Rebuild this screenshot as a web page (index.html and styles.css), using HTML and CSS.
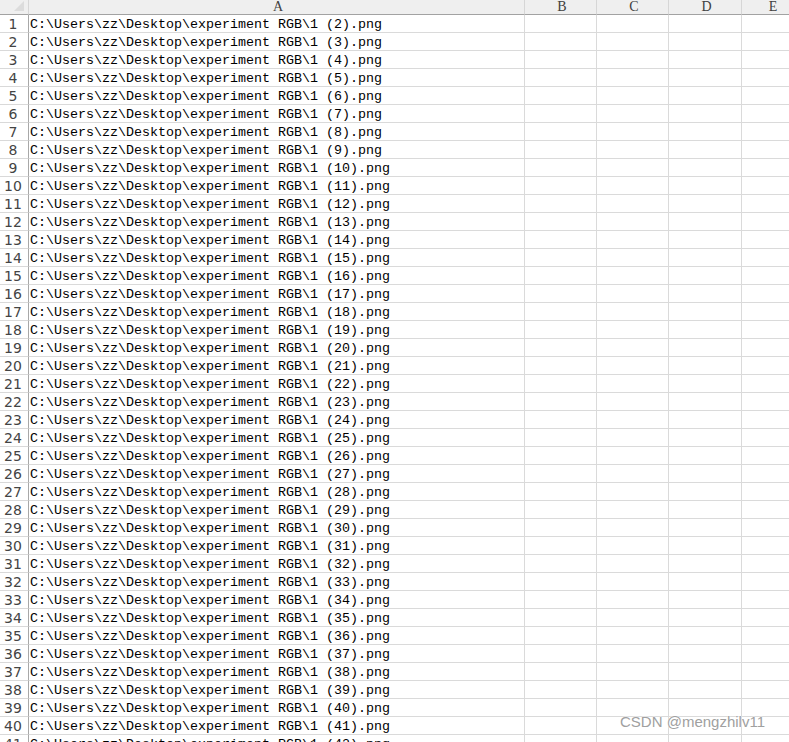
FILE: index.html
```html
<!DOCTYPE html>
<html>
<head>
<meta charset="utf-8">
<link rel="stylesheet" href="styles.css">
</head>
<body>
<div class="sheet">
  <div class="grid">
    <div class="hd corner"><span class="tri"></span></div>
    <div class="hd col">A</div>
    <div class="hd col">B</div>
    <div class="hd col">C</div>
    <div class="hd col">D</div>
    <div class="hd col last">E</div>

    <div class="rn">1</div><div class="cell a">C:\Users\zz\Desktop\experiment RGB\1 (2).png</div><div class="cell"></div><div class="cell"></div><div class="cell"></div><div class="cell last"></div>
    <div class="rn">2</div><div class="cell a">C:\Users\zz\Desktop\experiment RGB\1 (3).png</div><div class="cell"></div><div class="cell"></div><div class="cell"></div><div class="cell last"></div>
    <div class="rn">3</div><div class="cell a">C:\Users\zz\Desktop\experiment RGB\1 (4).png</div><div class="cell"></div><div class="cell"></div><div class="cell"></div><div class="cell last"></div>
    <div class="rn">4</div><div class="cell a">C:\Users\zz\Desktop\experiment RGB\1 (5).png</div><div class="cell"></div><div class="cell"></div><div class="cell"></div><div class="cell last"></div>
    <div class="rn">5</div><div class="cell a">C:\Users\zz\Desktop\experiment RGB\1 (6).png</div><div class="cell"></div><div class="cell"></div><div class="cell"></div><div class="cell last"></div>
    <div class="rn">6</div><div class="cell a">C:\Users\zz\Desktop\experiment RGB\1 (7).png</div><div class="cell"></div><div class="cell"></div><div class="cell"></div><div class="cell last"></div>
    <div class="rn">7</div><div class="cell a">C:\Users\zz\Desktop\experiment RGB\1 (8).png</div><div class="cell"></div><div class="cell"></div><div class="cell"></div><div class="cell last"></div>
    <div class="rn">8</div><div class="cell a">C:\Users\zz\Desktop\experiment RGB\1 (9).png</div><div class="cell"></div><div class="cell"></div><div class="cell"></div><div class="cell last"></div>
    <div class="rn">9</div><div class="cell a">C:\Users\zz\Desktop\experiment RGB\1 (10).png</div><div class="cell"></div><div class="cell"></div><div class="cell"></div><div class="cell last"></div>
    <div class="rn">10</div><div class="cell a">C:\Users\zz\Desktop\experiment RGB\1 (11).png</div><div class="cell"></div><div class="cell"></div><div class="cell"></div><div class="cell last"></div>
    <div class="rn">11</div><div class="cell a">C:\Users\zz\Desktop\experiment RGB\1 (12).png</div><div class="cell"></div><div class="cell"></div><div class="cell"></div><div class="cell last"></div>
    <div class="rn">12</div><div class="cell a">C:\Users\zz\Desktop\experiment RGB\1 (13).png</div><div class="cell"></div><div class="cell"></div><div class="cell"></div><div class="cell last"></div>
    <div class="rn">13</div><div class="cell a">C:\Users\zz\Desktop\experiment RGB\1 (14).png</div><div class="cell"></div><div class="cell"></div><div class="cell"></div><div class="cell last"></div>
    <div class="rn">14</div><div class="cell a">C:\Users\zz\Desktop\experiment RGB\1 (15).png</div><div class="cell"></div><div class="cell"></div><div class="cell"></div><div class="cell last"></div>
    <div class="rn">15</div><div class="cell a">C:\Users\zz\Desktop\experiment RGB\1 (16).png</div><div class="cell"></div><div class="cell"></div><div class="cell"></div><div class="cell last"></div>
    <div class="rn">16</div><div class="cell a">C:\Users\zz\Desktop\experiment RGB\1 (17).png</div><div class="cell"></div><div class="cell"></div><div class="cell"></div><div class="cell last"></div>
    <div class="rn">17</div><div class="cell a">C:\Users\zz\Desktop\experiment RGB\1 (18).png</div><div class="cell"></div><div class="cell"></div><div class="cell"></div><div class="cell last"></div>
    <div class="rn">18</div><div class="cell a">C:\Users\zz\Desktop\experiment RGB\1 (19).png</div><div class="cell"></div><div class="cell"></div><div class="cell"></div><div class="cell last"></div>
    <div class="rn">19</div><div class="cell a">C:\Users\zz\Desktop\experiment RGB\1 (20).png</div><div class="cell"></div><div class="cell"></div><div class="cell"></div><div class="cell last"></div>
    <div class="rn">20</div><div class="cell a">C:\Users\zz\Desktop\experiment RGB\1 (21).png</div><div class="cell"></div><div class="cell"></div><div class="cell"></div><div class="cell last"></div>
    <div class="rn">21</div><div class="cell a">C:\Users\zz\Desktop\experiment RGB\1 (22).png</div><div class="cell"></div><div class="cell"></div><div class="cell"></div><div class="cell last"></div>
    <div class="rn">22</div><div class="cell a">C:\Users\zz\Desktop\experiment RGB\1 (23).png</div><div class="cell"></div><div class="cell"></div><div class="cell"></div><div class="cell last"></div>
    <div class="rn">23</div><div class="cell a">C:\Users\zz\Desktop\experiment RGB\1 (24).png</div><div class="cell"></div><div class="cell"></div><div class="cell"></div><div class="cell last"></div>
    <div class="rn">24</div><div class="cell a">C:\Users\zz\Desktop\experiment RGB\1 (25).png</div><div class="cell"></div><div class="cell"></div><div class="cell"></div><div class="cell last"></div>
    <div class="rn">25</div><div class="cell a">C:\Users\zz\Desktop\experiment RGB\1 (26).png</div><div class="cell"></div><div class="cell"></div><div class="cell"></div><div class="cell last"></div>
    <div class="rn">26</div><div class="cell a">C:\Users\zz\Desktop\experiment RGB\1 (27).png</div><div class="cell"></div><div class="cell"></div><div class="cell"></div><div class="cell last"></div>
    <div class="rn">27</div><div class="cell a">C:\Users\zz\Desktop\experiment RGB\1 (28).png</div><div class="cell"></div><div class="cell"></div><div class="cell"></div><div class="cell last"></div>
    <div class="rn">28</div><div class="cell a">C:\Users\zz\Desktop\experiment RGB\1 (29).png</div><div class="cell"></div><div class="cell"></div><div class="cell"></div><div class="cell last"></div>
    <div class="rn">29</div><div class="cell a">C:\Users\zz\Desktop\experiment RGB\1 (30).png</div><div class="cell"></div><div class="cell"></div><div class="cell"></div><div class="cell last"></div>
    <div class="rn">30</div><div class="cell a">C:\Users\zz\Desktop\experiment RGB\1 (31).png</div><div class="cell"></div><div class="cell"></div><div class="cell"></div><div class="cell last"></div>
    <div class="rn">31</div><div class="cell a">C:\Users\zz\Desktop\experiment RGB\1 (32).png</div><div class="cell"></div><div class="cell"></div><div class="cell"></div><div class="cell last"></div>
    <div class="rn">32</div><div class="cell a">C:\Users\zz\Desktop\experiment RGB\1 (33).png</div><div class="cell"></div><div class="cell"></div><div class="cell"></div><div class="cell last"></div>
    <div class="rn">33</div><div class="cell a">C:\Users\zz\Desktop\experiment RGB\1 (34).png</div><div class="cell"></div><div class="cell"></div><div class="cell"></div><div class="cell last"></div>
    <div class="rn">34</div><div class="cell a">C:\Users\zz\Desktop\experiment RGB\1 (35).png</div><div class="cell"></div><div class="cell"></div><div class="cell"></div><div class="cell last"></div>
    <div class="rn">35</div><div class="cell a">C:\Users\zz\Desktop\experiment RGB\1 (36).png</div><div class="cell"></div><div class="cell"></div><div class="cell"></div><div class="cell last"></div>
    <div class="rn">36</div><div class="cell a">C:\Users\zz\Desktop\experiment RGB\1 (37).png</div><div class="cell"></div><div class="cell"></div><div class="cell"></div><div class="cell last"></div>
    <div class="rn">37</div><div class="cell a">C:\Users\zz\Desktop\experiment RGB\1 (38).png</div><div class="cell"></div><div class="cell"></div><div class="cell"></div><div class="cell last"></div>
    <div class="rn">38</div><div class="cell a">C:\Users\zz\Desktop\experiment RGB\1 (39).png</div><div class="cell"></div><div class="cell"></div><div class="cell"></div><div class="cell last"></div>
    <div class="rn">39</div><div class="cell a">C:\Users\zz\Desktop\experiment RGB\1 (40).png</div><div class="cell"></div><div class="cell"></div><div class="cell"></div><div class="cell last"></div>
    <div class="rn">40</div><div class="cell a">C:\Users\zz\Desktop\experiment RGB\1 (41).png</div><div class="cell"></div><div class="cell"></div><div class="cell"></div><div class="cell last"></div>
    <div class="rn">41</div><div class="cell a">C:\Users\zz\Desktop\experiment RGB\1 (42).png</div><div class="cell"></div><div class="cell"></div><div class="cell"></div><div class="cell last"></div>
  </div>
  <div class="watermark">CSDN @mengzhilv11</div>
</div>
</body>
</html>
```

FILE: styles.css
```css
html, body {
  margin: 0;
  padding: 0;
  background: #ffffff;
}
.sheet {
  position: relative;
  width: 789px;
  height: 742px;
  overflow: hidden;
}
.grid {
  display: grid;
  grid-template-columns: 29px 496px 72px 72px 73px 60px;
  grid-template-rows: 15px;
  grid-auto-rows: 18px;
}
.hd {
  background: #efefef;
  border-bottom: 1px solid #a2a2a2;
  border-right: 1px solid #d6d6d6;
  box-sizing: border-box;
  font-family: "Liberation Serif", serif;
  font-size: 14px;
  line-height: 14px;
  color: #404040;
  text-align: center;
}
.hd.col {
  padding-left: 3px;
}
.corner {
  position: relative;
}
.tri {
  position: absolute;
  right: 4px;
  bottom: 3px;
  width: 0;
  height: 0;
  border-left: 10px solid transparent;
  border-bottom: 10px solid #dcdcdc;
}
.rn {
  box-sizing: border-box;
  border-right: 1px solid #a8a8a8;
  border-bottom: 1px solid #d9d9d9;
  font-family: "DejaVu Sans", sans-serif;
  font-size: 14px;
  line-height: 17px;
  color: #444444;
  text-align: center;
  padding-top: 1px;
  padding-right: 2px;
}
.cell {
  box-sizing: border-box;
  border-right: 1px solid #dadada;
  border-bottom: 1px solid #dadada;
  font-family: "Liberation Mono", monospace;
  font-size: 13.33px;
  line-height: 17px;
  padding-top: 1px;
  color: #000000;
  white-space: nowrap;
  overflow: hidden;
}
.cell.a {
  padding-left: 1px;
}
.watermark {
  position: absolute;
  left: 620px;
  top: 713px;
  font-family: "Liberation Sans", sans-serif;
  font-size: 15px;
  line-height: 18px;
  color: #a0a0a0;
  text-shadow: 0 0 1px #ffffff, 0 0 2px #ffffff;
}
```
